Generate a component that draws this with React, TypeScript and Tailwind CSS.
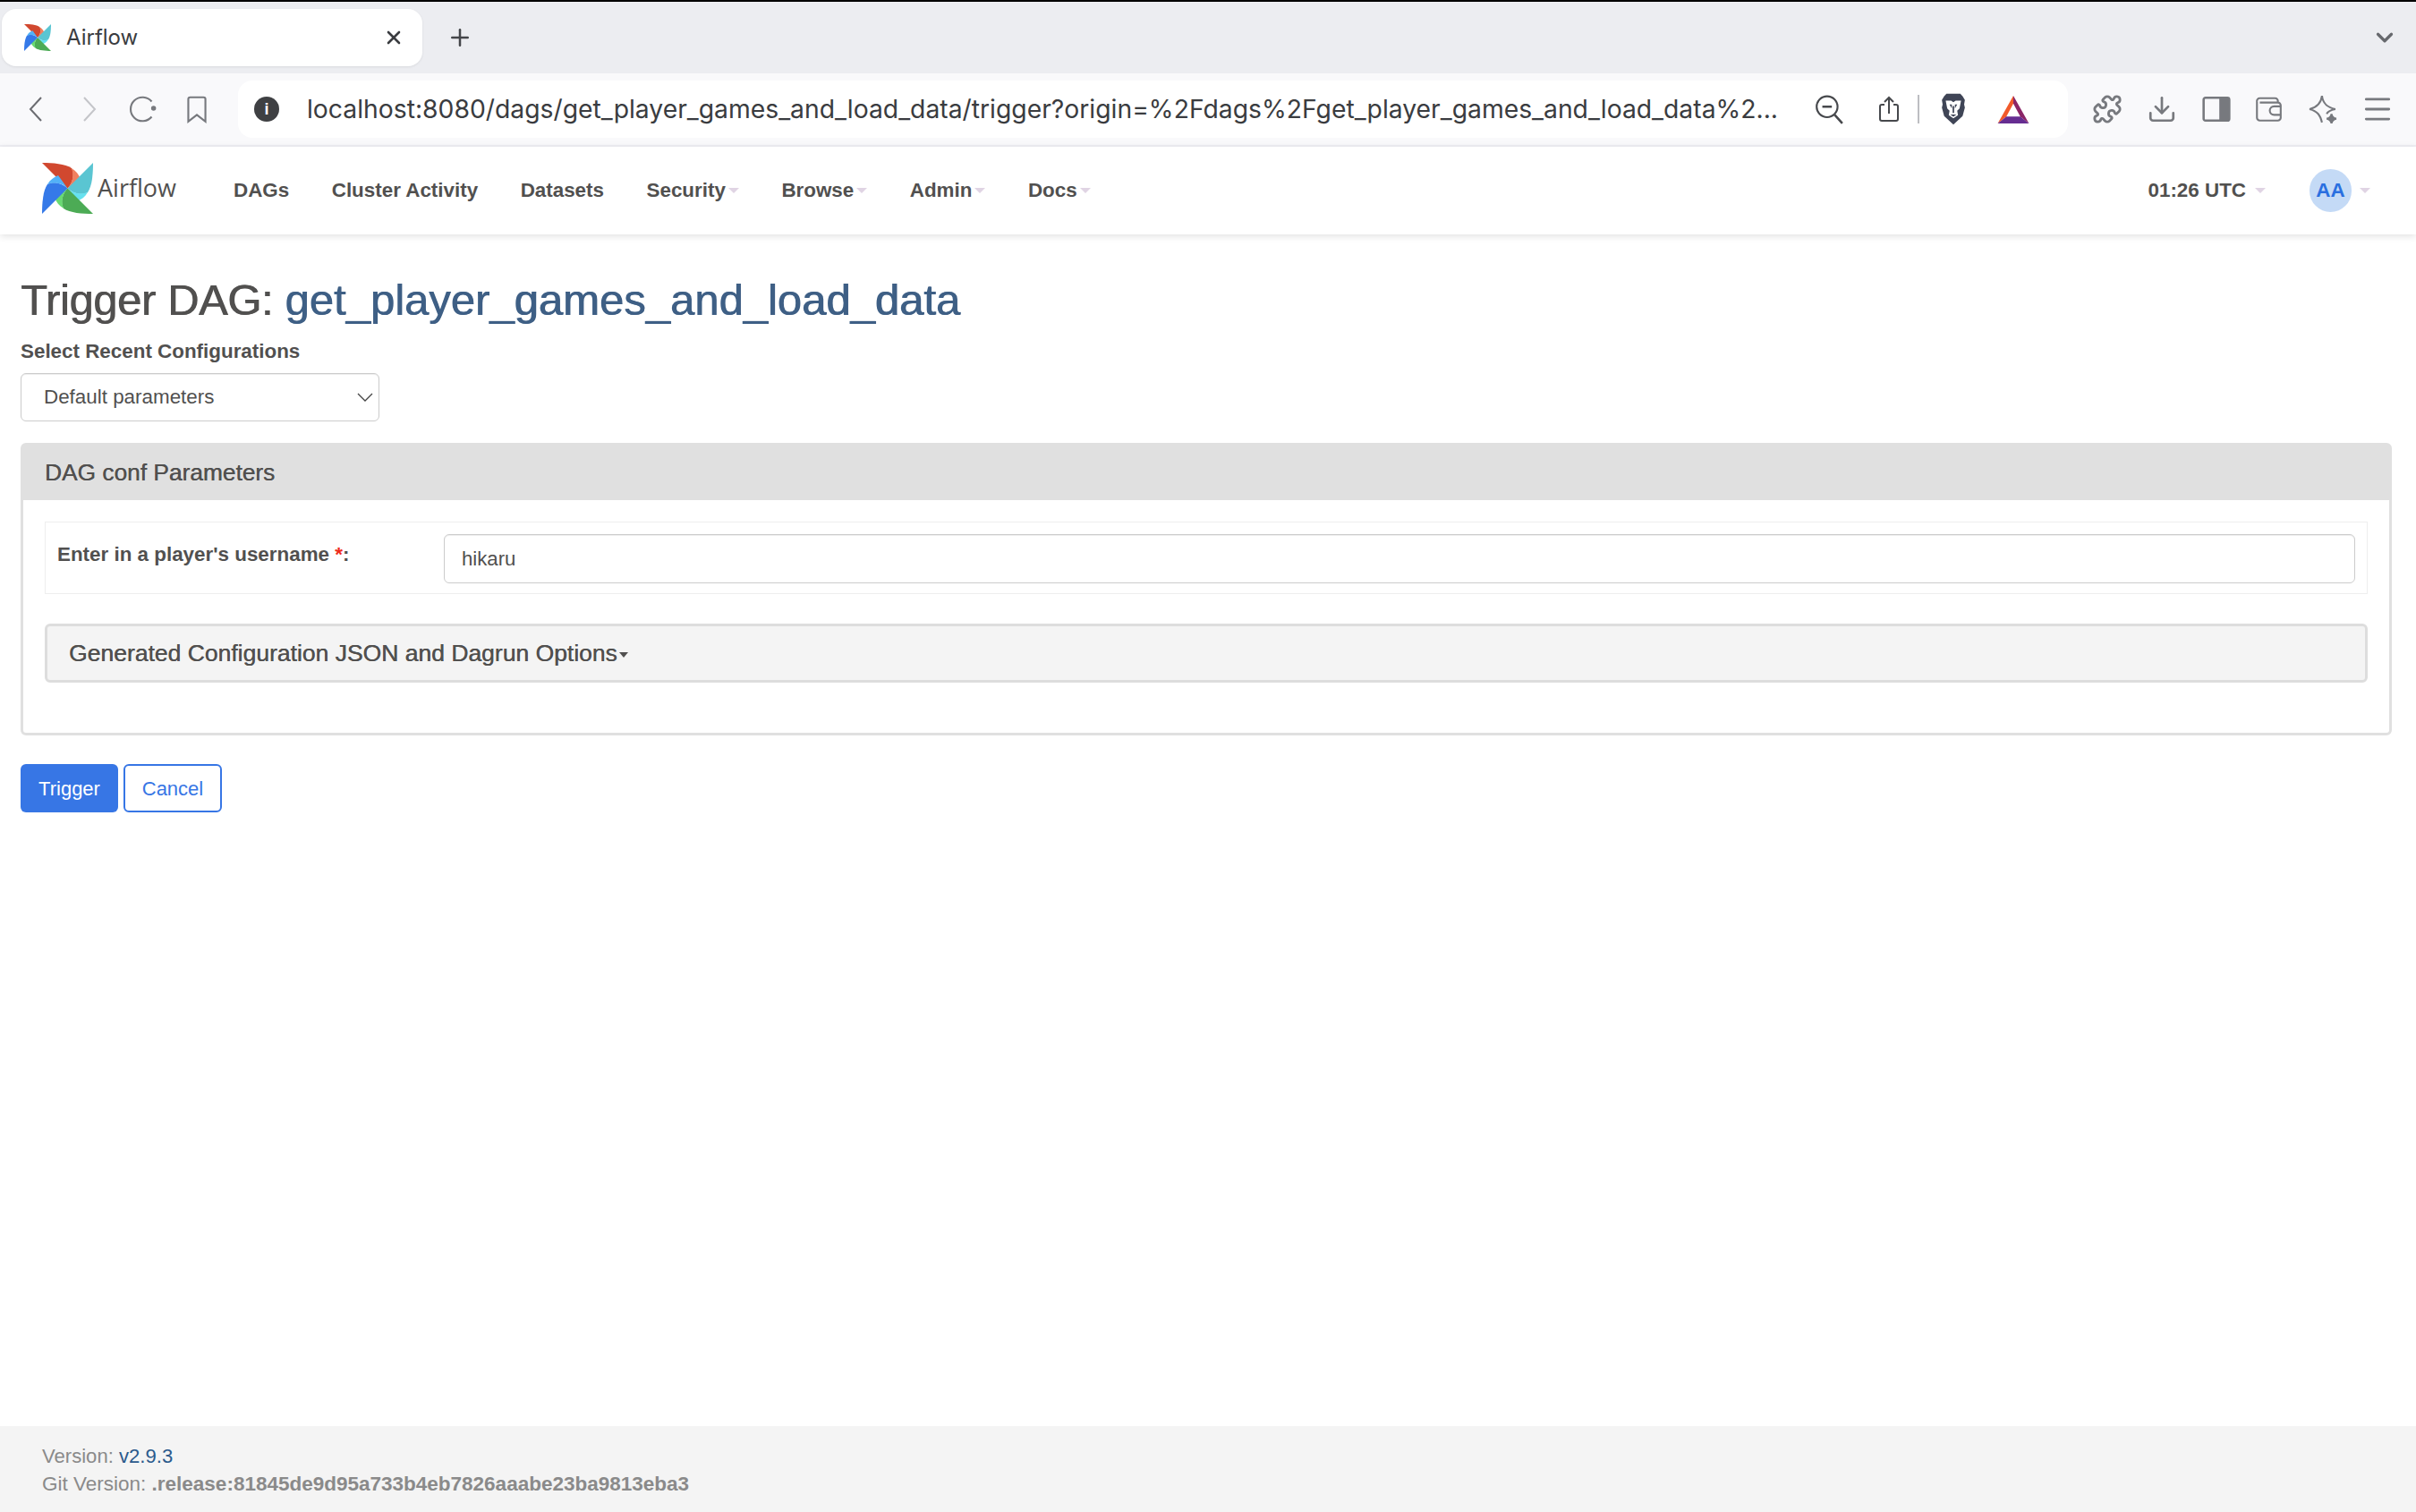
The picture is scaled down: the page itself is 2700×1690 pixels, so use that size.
import { ChevronDown, Download, Menu, Plus, Puzzle, X } from "lucide-react";

function Pinwheel({ className }: { className: string }) {
  const blades = [
    { angle: 0, dark: "#D1482F", light: "#F0805F" },
    { angle: 90, dark: "#5AC5D2", light: "#66E1EF" },
    { angle: 180, dark: "#4CAB55", light: "#68DA72" },
    { angle: 270, dark: "#3579E8", light: "#53B1F7" },
  ];
  return (
    <svg viewBox="0 0 57 57" className={className}>
      {blades.map((b) => (
        <g key={b.angle} transform={`rotate(${b.angle} 28.5 28.5)`}>
          <path d="M28.5 28.5L0 0C12 0 26 1 33 6C37 13 34 23 28.5 28.5Z" fill={b.dark} />
          <path d="M28.5 28.5C34 23 36 14 33 6C38 9 41 13 43 18Z" fill={b.light} />
        </g>
      ))}
    </svg>
  );
}

function BraveLion() {
  return (
    <svg viewBox="0 0 32 42" className="h-[36px] w-[32px]">
      <path d="M7 1H25L28 4L31 9L30 15L31 19L28 30L16 41L4 30L1 19L2 15L1 9L4 4Z" fill="#3F4556" />
      <path d="M6 10H13L16 12L19 10H26L24 20L21 23L22 29L16 33L10 29L11 23L8 20Z" fill="#FFFFFF" />
      <path d="M11 15H14L14 20ZM21 15H18L18 20ZM15 17H17V26H15ZM12 28H20L16 31Z" fill="#3F4556" />
    </svg>
  );
}

function BatLogo() {
  return (
    <svg viewBox="0 0 36 32" className="h-[31px] w-[36px]">
      <path d="M18 0L0 32L10 24L18 9Z" fill="#F15A2B" />
      <path d="M18 0L36 32L26 24L18 9Z" fill="#8B2567" />
      <path d="M0 32H36L26 24H10Z" fill="#662D91" />
    </svg>
  );
}

function ToolIcon({ children, className }: { children: React.ReactNode; className: string }) {
  return (
    <svg viewBox="0 0 32 32" fill="none" stroke="currentColor" strokeWidth="2" className={className}>
      {children}
    </svg>
  );
}

function Caret() {
  return <span className="block h-0 w-0 border-x-[6px] border-t-[6px] border-x-transparent border-t-[#E0D4E4]" />;
}

const navItems = [
  { label: "DAGs", menu: false },
  { label: "Cluster Activity", menu: false },
  { label: "Datasets", menu: false },
  { label: "Security", menu: true },
  { label: "Browse", menu: true },
  { label: "Admin", menu: true },
  { label: "Docs", menu: true },
];

export default function App() {
  return (
    <div className="flex h-screen flex-col overflow-hidden bg-white [font-family:'Liberation_Sans',sans-serif] text-[22.4px] text-[#51504F]">
      {/* tab strip */}
      <div className="h-[2px] shrink-0 bg-black" />
      <div className="flex h-[80px] shrink-0 items-center bg-[#ECEDF1] pl-[2px] pr-[20px]">
        <div className="flex h-[64px] w-[470px] items-center rounded-[16px] bg-white pl-[25px] pr-[20px] shadow-[0_1px_3px_rgba(0,0,0,0.08)]">
          <Pinwheel className="h-[30px] w-[30px]" />
          <span className="ml-[17px] flex-1 [font-family:Inter,sans-serif] text-[24px] text-[#3A3C40]">Airflow</span>
          <X size={24} strokeWidth={2.6} className="text-[#3A3C40]" />
        </div>
        <Plus size={30} strokeWidth={2} className="ml-[27px] text-[#44464A]" />
        <ChevronDown size={30} strokeWidth={2.6} className="ml-auto text-[#66686D]" />
      </div>

      {/* toolbar */}
      <div className="flex h-[80px] shrink-0 items-center bg-[#F9F9FB] pl-[32px] pr-[24px]">
        <svg viewBox="0 0 16 28" fill="none" stroke="#6B6C71" strokeWidth="2" className="h-[28px] w-[16px]">
          <path d="M14 1L2 14L14 27" />
        </svg>
        <svg viewBox="0 0 16 28" fill="none" stroke="#C4C5C9" strokeWidth="2" className="ml-[44px] h-[28px] w-[16px]">
          <path d="M2 1L14 14L2 27" />
        </svg>
        <ToolIcon className="ml-[36px] h-[34px] w-[34px] text-[#77797E]">
          <path d="M24 8A12.5 12.5 0 1 0 24 24" />
          <circle cx="26" cy="15" r="2.6" fill="currentColor" stroke="none" />
        </ToolIcon>
        <ToolIcon className="ml-[25px] h-[34px] w-[34px] text-[#77797E]">
          <path d="M7 5.5A2 2 0 0 1 9 3.5H23A2 2 0 0 1 25 5.5V29L16 22L7 29Z" />
        </ToolIcon>
        <div className="ml-[29px] flex h-[64px] flex-1 items-center rounded-[16px] bg-white pl-[18px] pr-[43px]">
          <span className="flex h-[28px] w-[28px] shrink-0 items-center justify-center rounded-full bg-[#3F4043] text-[18px] font-bold leading-none text-white">
            i
          </span>
          <span className="ml-[31px] flex-1 whitespace-nowrap [font-family:Inter,sans-serif] text-[28.3px] text-[#3A3C40]">
            localhost:8080/dags/get_player_games_and_load_data/trigger?origin=%2Fdags%2Fget_player_games_and_load_data%2...
          </span>
          <ToolIcon className="h-[34px] w-[34px] text-[#46484C]">
            <circle cx="14" cy="13.5" r="11" />
            <path d="M9 13.5H19M22 22L30 31" strokeWidth="2.4" />
          </ToolIcon>
          <ToolIcon className="ml-[34px] h-[38px] w-[32px] text-[#46484C]">
            <path d="M11 11H8A2 2 0 0 0 6 13V27A2 2 0 0 0 8 29H24A2 2 0 0 0 26 27V13A2 2 0 0 0 24 11H21M16 21V3M11 8L16 3L21 8" />
          </ToolIcon>
          <div className="ml-[16px] h-[32px] w-[2px] bg-[#BDBEC2]" />
          <div className="ml-[22px]">
            <BraveLion />
          </div>
          <div className="ml-[33px]">
            <BatLogo />
          </div>
        </div>
        <Puzzle size={34} strokeWidth={2} className="ml-[27px] text-[#77797E]" />
        <Download size={34} strokeWidth={1.9} className="ml-[27px] text-[#77797E]" />
        <ToolIcon className="ml-[27px] h-[34px] w-[34px] text-[#77797E]">
          <rect x="2.5" y="4" width="27" height="24" rx="2" strokeWidth="2.4" />
          <rect x="19" y="4" width="10" height="24" fill="currentColor" stroke="none" />
        </ToolIcon>
        <ToolIcon className="ml-[24px] h-[34px] w-[34px] text-[#77797E]">
          <path d="M4 8A3 3 0 0 1 7 4.5H23A3 3 0 0 1 26 8V9H7M4 8V25A3 3 0 0 0 7 28H26A3 3 0 0 0 29 25V12A3 3 0 0 0 26 9M29 13H22A3 3 0 0 0 22 22H29" />
        </ToolIcon>
        <ToolIcon className="ml-[27px] h-[36px] w-[34px] text-[#77797E]">
          <path d="M15 2C16 10 20 14 29 16C24 17 21 18 20 21M15 2C14 10 10 14 2 16C10 18 13 22 15 30" />
          <path d="M25 21C25.5 24 27 25.5 30 26C27 26.5 25.5 28 25 31C24.5 28 23 26.500 20 26C23 25.500 24.500 24 25 21Z" fill="currentColor" />
        </ToolIcon>
        <Menu size={38} strokeWidth={1.8} className="ml-[25px] text-[#77797E]" />
      </div>
      <div className="h-[2px] shrink-0 bg-[#EFEFF4]" />

      {/* airflow navbar */}
      <nav className="z-10 flex h-[98px] shrink-0 items-center bg-white pl-[47px] pr-[51px] shadow-[0_2px_8px_rgba(0,0,0,0.12)]">
        <Pinwheel className="mb-[6px] h-[57px] w-[57px]" />
        <span className="mb-[6px] ml-[5px] [font-family:'Open_Sans',sans-serif] text-[27px] text-[#51504F]">Airflow</span>
        <ul className="ml-[64px] flex items-center gap-[47.5px]">
          {navItems.map((item) => (
            <li key={item.label} className="flex items-center gap-[3px] text-[22.4px] font-bold">
              {item.label}
              {item.menu && <Caret />}
            </li>
          ))}
        </ul>
        <span className="ml-auto text-[22.4px] font-bold">01:26 UTC</span>
        <span className="ml-[10px]">
          <Caret />
        </span>
        <span className="ml-[49px] flex h-[48px] w-[47px] items-center justify-center rounded-full bg-[#C4DAF6] text-[22.4px] font-bold text-[#2A6FE0]">
          AA
        </span>
        <span className="ml-[9px]">
          <Caret />
        </span>
      </nav>

      {/* page body */}
      <main className="flex-1 pl-[23px] pr-[27px] pt-[43px]">
        <h2 className="text-[48.8px] leading-[60px] [text-shadow:0.8px_0_0_currentColor]">
          <span className="tracking-[-0.3px]">Trigger DAG: </span>
          <a className="text-[49px] text-[#3E5F85]">get_player_games_and_load_data</a>
        </h2>
        <label className="mt-[13px] block font-bold leading-[30px]">Select Recent Configurations</label>
        <div className="mt-[9px] flex h-[54px] w-[401px] items-center justify-between rounded-[6px] border border-[#CCCCCC] pl-[25px] pr-[6px] shadow-[inset_0_1px_1px_rgba(0,0,0,0.075)]">
          <span>Default parameters</span>
          <svg viewBox="0 0 18 10" fill="none" stroke="#444" strokeWidth="1.3" className="h-[10px] w-[18px]">
            <path d="M1 1L9 9L17 1" />
          </svg>
        </div>

        <section className="mt-[24px] rounded-[6px] border-[3px] border-[#E0E0E0]">
          <div className="flex h-[61px] items-center bg-[#E0E0E0] pl-[24px] text-[26.3px] text-[#51504F] [text-shadow:0.3px_0_0_currentColor]">
            DAG conf Parameters
          </div>
          <div className="px-[24px] pb-[56px] pt-[24px]">
            <div className="flex h-[81px] border border-[#EEEEEE] py-[13px] pl-[13px] pr-[13px]">
              <label className="w-[432px] pt-[8px] font-bold leading-[30px]">
                Enter in a player's username <span className="text-[#EE2A1B]">*</span>:
              </label>
              <input
                readOnly
                value="hikaru"
                className="h-[55px] flex-1 rounded-[6px] border border-[#CCCCCC] pl-[19px] text-[22.2px] shadow-[inset_0_1px_1px_rgba(0,0,0,0.075)] outline-none"
              />
            </div>
            <div className="mt-[33px] flex h-[66px] items-center rounded-[6px] border-[3px] border-[#DDDDDD] bg-[#F4F4F4] pl-[24px] pt-[1px] text-[26.5px] [text-shadow:0.3px_0_0_currentColor]">
              Generated Configuration JSON and Dagrun Options
              <span className="ml-[2px] mt-[3px] h-0 w-0 border-x-[5.5px] border-t-[6px] border-x-transparent border-t-[#51504F]" />
            </div>
          </div>
        </section>

        <div className="mt-[32px] flex gap-[6px]">
          <button className="h-[54px] w-[109px] rounded-[6px] bg-[#3776E5] text-[22px] text-white">Trigger</button>
          <button className="h-[54px] w-[110px] rounded-[6px] border-2 border-[#3776E5] bg-white text-[22px] text-[#3776E5]">Cancel</button>
        </div>
      </main>

      {/* footer */}
      <footer className="h-[96px] shrink-0 bg-[#F4F4F4] pl-[47px] pt-[18px] text-[22.1px] leading-[31px] text-[#8A8A8A]">
        <div>
          Version: <a className="text-[#2B5A8C]">v2.9.3</a>
        </div>
        <div className="text-[22.5px]">
          Git Version: <strong className="font-bold">.release:81845de9d95a733b4eb7826aaabe23ba9813eba3</strong>
        </div>
      </footer>
    </div>
  );
}
